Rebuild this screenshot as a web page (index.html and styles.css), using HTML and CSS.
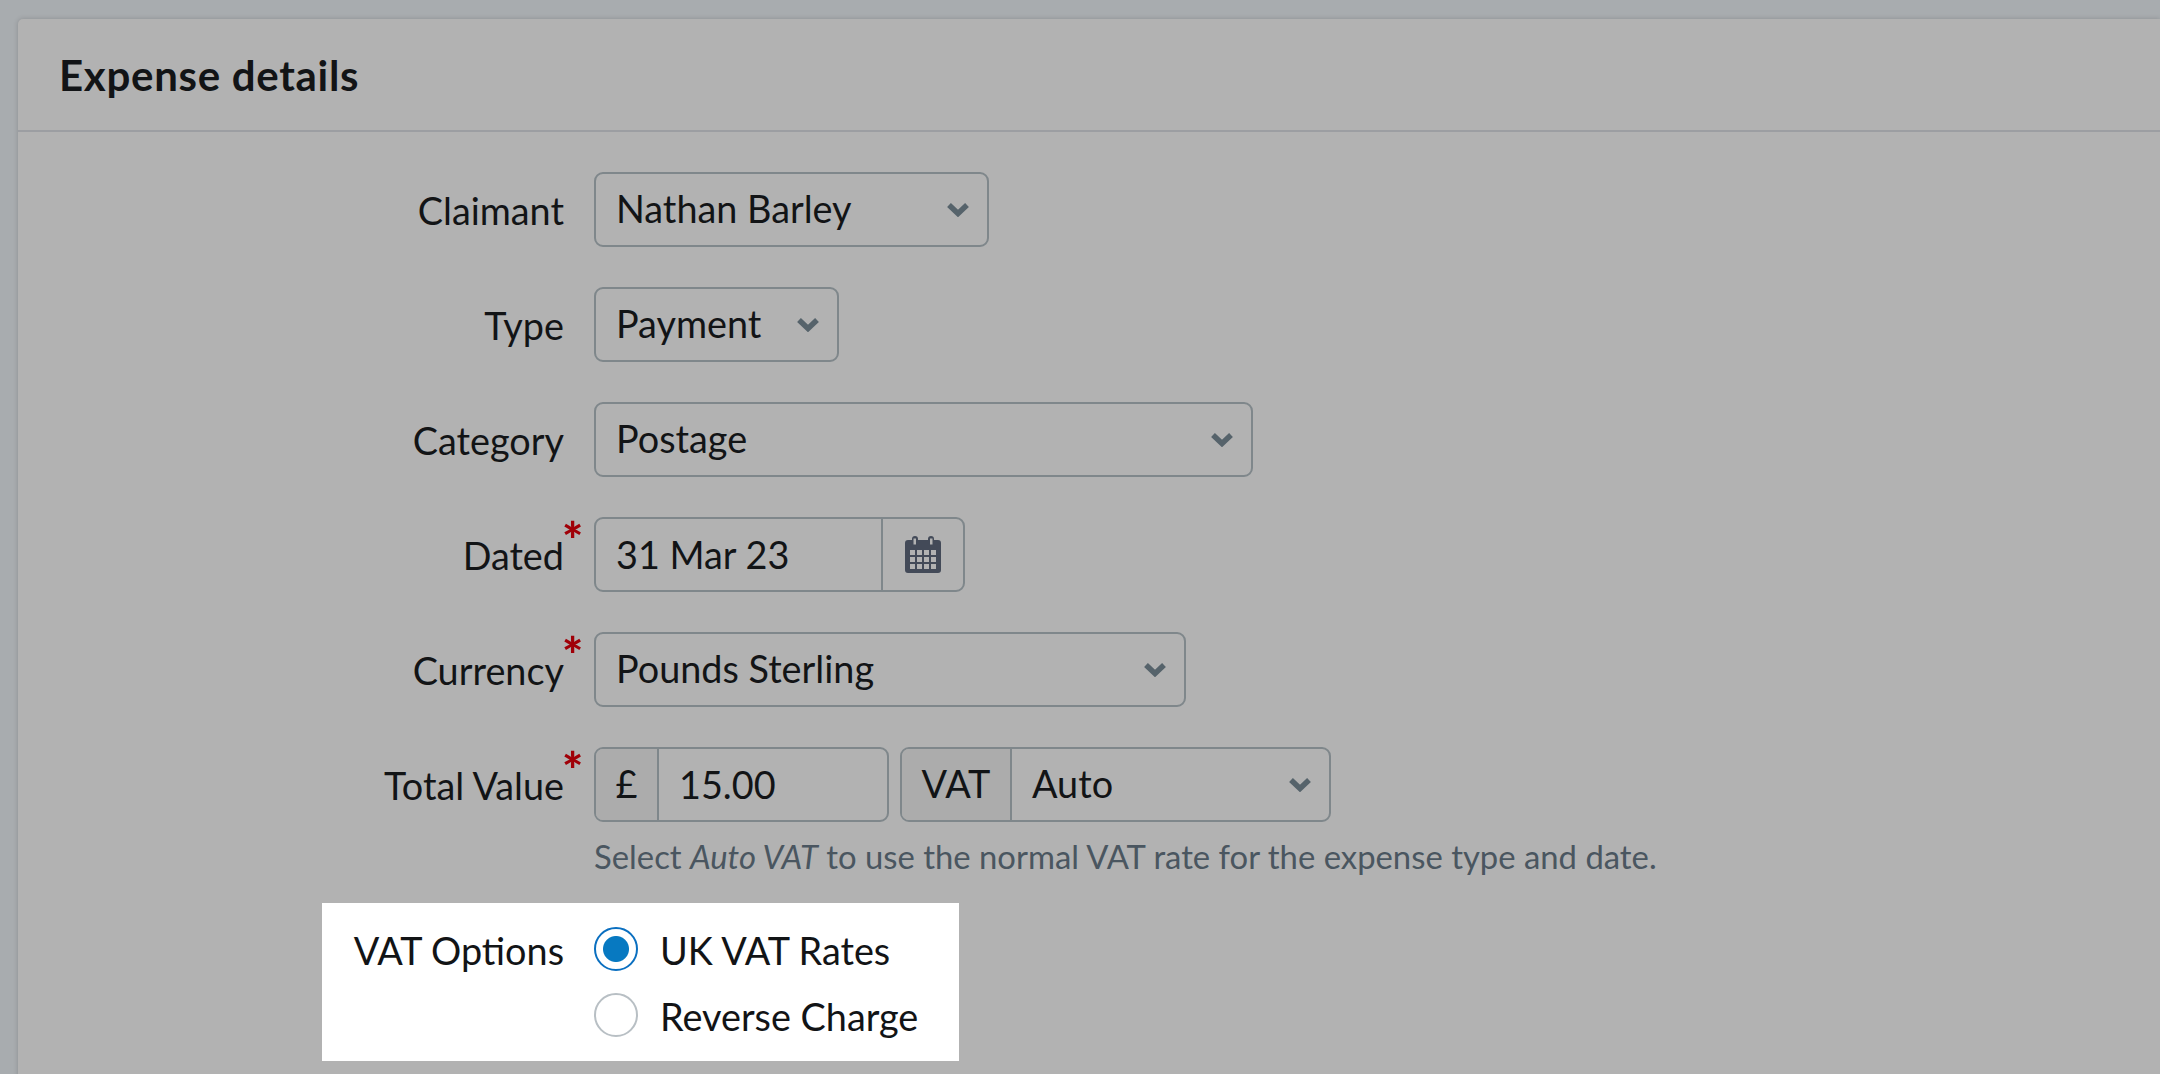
FILE: index.html
```html
<!DOCTYPE html>
<html lang="en">
<head>
  <meta charset="UTF-8">
  <title>Expense details</title>
  <link rel="stylesheet" href="styles.css">
</head>
<body>

  <div class="card">
    <div class="card-header">
      <h2>Expense details</h2>
    </div>

    <form class="form">
      <div class="row">
        <label>Claimant</label>
        <div class="field w-claimant">
          <span class="value">Nathan Barley</span>
          <svg class="chevron" viewBox="0 0 22 15"><polyline points="2,3 11,11.500 20,3"/></svg>
        </div>
      </div>

      <div class="row">
        <label>Type</label>
        <div class="field w-type">
          <span class="value">Payment</span>
          <svg class="chevron" viewBox="0 0 22 15"><polyline points="2,3 11,11.500 20,3"/></svg>
        </div>
      </div>

      <div class="row">
        <label>Category</label>
        <div class="field w-category">
          <span class="value">Postage</span>
          <svg class="chevron" viewBox="0 0 22 15"><polyline points="2,3 11,11.500 20,3"/></svg>
        </div>
      </div>

      <div class="row">
        <label>Dated<span class="req">*</span></label>
        <div class="field w-date">
          <span class="value value-low">31 Mar 23</span>
          <span class="date-btn">
            <svg class="calendar" viewBox="0 0 36 37">
              <path fill="#434a58" d="M3 4h4V3a3 3 0 0 1 6 0v1h10V3a3 3 0 0 1 6 0v1h4a3 3 0 0 1 3 3v27a3 3 0 0 1-3 3H3a3 3 0 0 1-3-3V7a3 3 0 0 1 3-3z"/>
              <path fill="#b2b2b2" d="M8.500 2.500h2.500v6h-2.500zM25 2.500h2.500v6H25z"/>
              <path fill="#b2b2b2" d="M5 14h5v5H5zM12 14h5v5h-5zM19 14h5v5h-5zM26 14h5v5h-5zM5 21h5v5H5zM12 21h5v5h-5zM19 21h5v5h-5zM26 21h5v5h-5zM5 28h5v5H5zM12 28h5v5h-5zM19 28h5v5h-5zM26 28h5v5h-5z"/>
            </svg>
          </span>
        </div>
      </div>

      <div class="row">
        <label>Currency<span class="req">*</span></label>
        <div class="field w-currency">
          <span class="value">Pounds Sterling</span>
          <svg class="chevron" viewBox="0 0 22 15"><polyline points="2,3 11,11.500 20,3"/></svg>
        </div>
      </div>

      <div class="row row-total">
        <label>Total Value<span class="req">*</span></label>
        <div class="total-controls">
          <div class="total-fields">
            <div class="field w-amount">
              <span class="addon addon-pound">£</span>
              <span class="value value-low">15.00</span>
            </div>
            <div class="field w-vat">
              <span class="addon addon-vat">VAT</span>
              <span class="value value-auto">Auto</span>
              <svg class="chevron" viewBox="0 0 22 15"><polyline points="2,3 11,11.500 20,3"/></svg>
            </div>
          </div>
          <p class="help">Select <em>Auto VAT</em> to use the normal VAT rate for the expense type and date.</p>
        </div>
      </div>

      <div class="highlight">
        <label>VAT Options</label>
        <div class="radios">
          <div class="radio-row">
            <span class="radio checked"></span>
            <span class="radio-text">UK VAT Rates</span>
          </div>
          <div class="radio-row">
            <span class="radio"></span>
            <span class="radio-text">Reverse Charge</span>
          </div>
        </div>
      </div>
    </form>
  </div>

</body>
</html>
```

FILE: styles.css
```css
* {
  box-sizing: border-box;
  font-family: Lato, "Liberation Sans", sans-serif;
}

html, body {
  height: 100%;
}

body {
  margin: 0;
  padding: 19px 0 0 18px;
  background-color: #a8acaf;
  color: #121416;
  font-size: 37.8px;
  overflow: hidden;
}

.card {
  height: 1100px;
  background: #b2b2b2;
  border-radius: 5px 0 0 0;
  box-shadow: 0 0 5px rgba(0,0,0,0.18);
}

.card-header {
  height: 113px;
  padding: 0 41px;
  display: flex;
  align-items: center;
  border-bottom: 2px solid #9c9ea2;
}

h2 {
  margin: 0;
  font-size: 42px;
  font-weight: 700;
  letter-spacing: 0.7px;
}

.form {
  padding: 40px 0 0 304px;
}

.row {
  display: flex;
  gap: 30px;
  margin-bottom: 40px;
}

.row label,
.highlight label {
  position: relative;
  flex: none;
  width: 242px;
  height: 75px;
  line-height: 77px;
  text-align: right;
  white-space: nowrap;
}

.req {
  position: absolute;
  left: 100%;
  top: 1px;
  margin-left: -2px;
  color: #a00008;
  font-size: 50px;
  font-weight: 900;
  line-height: 40px;
  padding-top: 2px;
}

.field {
  display: flex;
  align-items: center;
  height: 75px;
  border: 2px solid #7f878b;
  border-radius: 9px;
  overflow: hidden;
}

.w-claimant { width: 395px; }
.w-type { width: 245px; }
.w-category { width: 659px; }
.w-date { width: 371px; }
.w-currency { width: 592px; }
.w-amount { width: 295px; }
.w-vat { width: 431px; }

.value {
  flex: 1;
  padding: 0 0 2px 20px;
  white-space: nowrap;
}

.value-low {
  padding-bottom: 0;
}

.chevron {
  flex: none;
  width: 22px;
  height: 15px;
  margin-right: 18px;
  fill: none;
  stroke: #56636b;
  stroke-width: 5.5;
}

.date-btn {
  flex: none;
  width: 82px;
  height: 100%;
  display: flex;
  align-items: center;
  justify-content: center;
  border-left: 2px solid #7f878b;
}

.calendar {
  width: 36px;
  height: 37px;
}

.addon {
  flex: none;
  height: 100%;
  padding-bottom: 2px;
  display: flex;
  align-items: center;
  justify-content: center;
  background: #acacac;
  border-right: 2px solid #7f878b;
}

.addon-pound { width: 63px; }
.addon-vat { width: 110px; }

.total-fields {
  display: flex;
  gap: 11px;
}

.row-total {
  margin-bottom: 26px;
}

.help {
  margin: 15px 0 0;
  color: #4a5660;
  font-size: 32.85px;
  line-height: 40px;
  white-space: nowrap;
}

.highlight {
  display: flex;
  gap: 30px;
  width: 637px;
  height: 158px;
  padding-top: 24px;
  background: #fff;
}

.highlight label {
  height: 44px;
  line-height: 48px;
}

.radios {
  display: flex;
  flex-direction: column;
  gap: 22px;
}

.radio-row {
  display: flex;
  align-items: center;
  gap: 22px;
  height: 44px;
  white-space: nowrap;
}

.radio-text {
  padding-top: 2px;
}

.radio {
  flex: none;
  width: 44px;
  height: 44px;
  border: 2px solid #b8bfc4;
  border-radius: 50%;
  background: #fff;
}

.radio.checked {
  border-color: #0a6fc0;
  background: radial-gradient(circle, #0779c1 0 12.500px, #fff 13.500px);
}
```
